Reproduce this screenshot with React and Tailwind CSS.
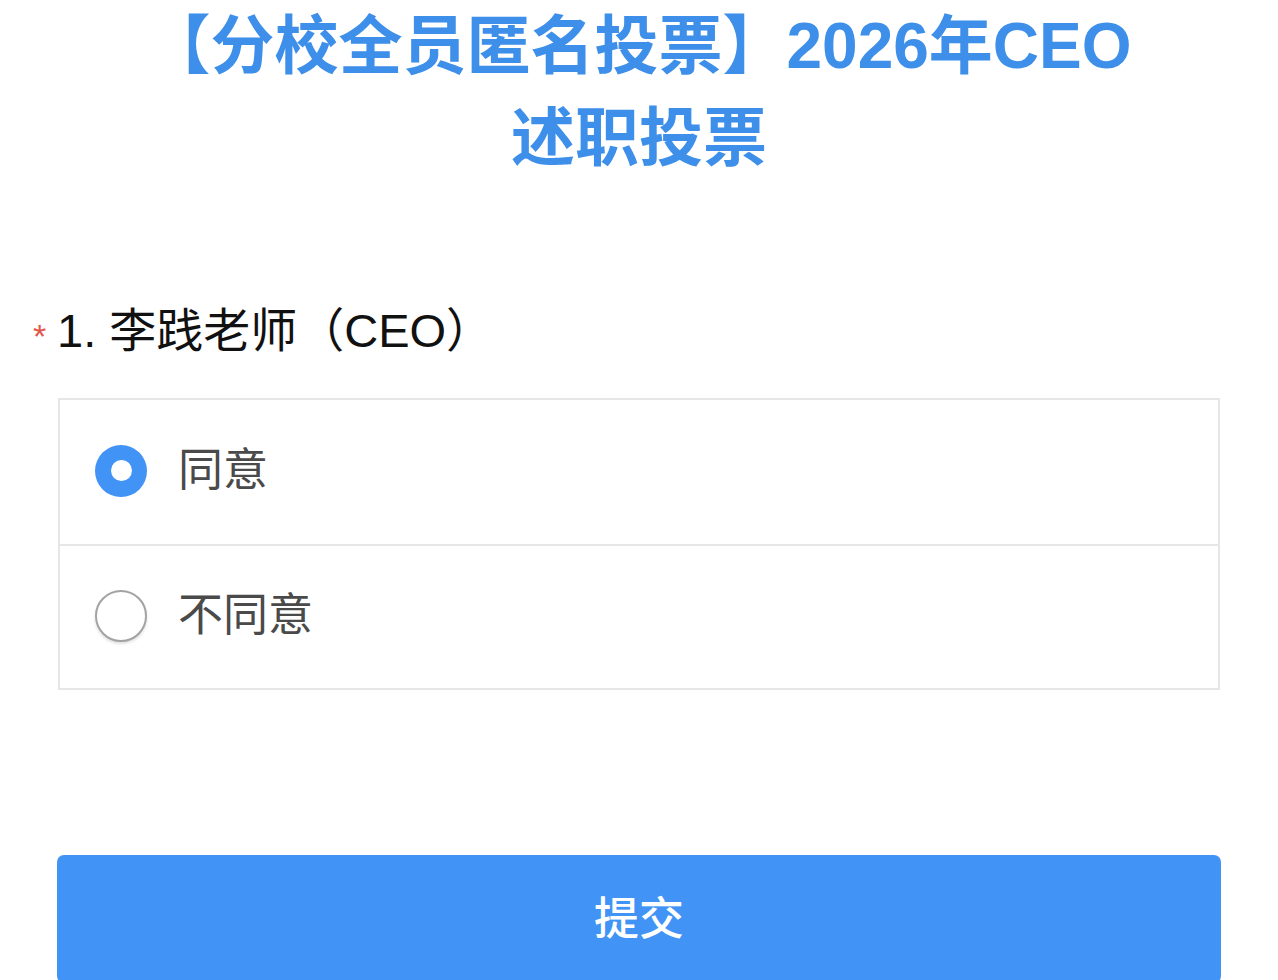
import React, { useState } from 'react';

const FONT = "font-['Liberation_Sans','Noto_Sans_CJK_SC',sans-serif]";

function Radio({ checked }) {
  return checked ? (
    <span className="flex h-[52px] w-[52px] shrink-0 items-center justify-center rounded-full bg-[#4193f5]">
      <span className="h-[21px] w-[21px] rounded-full bg-white"></span>
    </span>
  ) : (
    <span className="h-[52px] w-[52px] shrink-0 rounded-full border-[2.5px] border-[#a3a3a3] bg-white shadow-[0_2px_3px_rgba(0,0,0,0.12)]"></span>
  );
}

export default function App() {
  const [choice, setChoice] = useState('agree');
  const options = [
    { id: 'agree', label: '同意' },
    { id: 'disagree', label: '不同意' },
  ];

  return (
    <div className={`min-h-[980px] w-full overflow-hidden bg-white ${FONT}`}>
      <h1 className="text-center text-[64px] font-bold leading-[92px] text-[#3d8fe9]">
        【分校全员匿名投票】2026年CEO
        <br />
        述职投票
      </h1>

      <div className="px-[57px]">
        <div className="mt-[115px] flex items-center h-[64px] -ml-[24px]">
          <span className="w-[24px] text-[34px] leading-none text-[#e0564b] pt-[10px]">*</span>
          <span className="text-[47px] leading-[64px] text-[#111]">1. 李践老师（CEO）</span>
        </div>

        <div className="mt-[35px] ml-[1px] mr-[1px] border-2 border-[#e6e6e6]">
          {options.map((o, i) => (
            <div
              key={o.id}
              onClick={() => setChoice(o.id)}
              className={`flex h-[144px] cursor-pointer items-center pl-[35px] pb-[3px] ${i > 0 ? 'border-t-2 border-[#e6e6e6]' : ''}`}
            >
              <Radio checked={choice === o.id} />
              <span className="ml-[31px] text-[45px] leading-none text-[#4a4a4a]">{o.label}</span>
            </div>
          ))}
        </div>

        <button className="mt-[165px] flex h-[128px] w-full items-center justify-center rounded-[7px] bg-[#4193f5] pt-[2px] text-[45px] font-medium text-white">
          提交
        </button>
      </div>
    </div>
  );
}
